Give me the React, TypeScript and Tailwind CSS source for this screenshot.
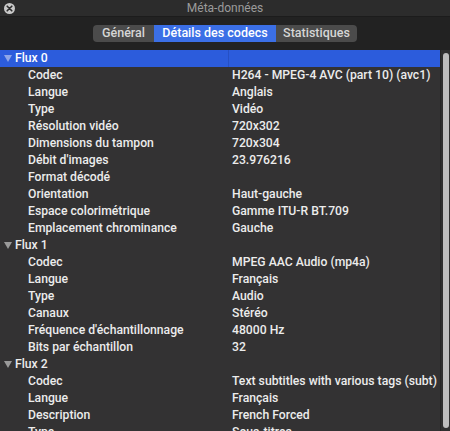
import React from 'react';

type Row = { label: string; value: string };
type Stream = { name: string; rows: Row[] };

const streams: Stream[] = [
  {
    name: 'Flux 0',
    rows: [
      { label: 'Codec', value: 'H264 - MPEG-4 AVC (part 10) (avc1)' },
      { label: 'Langue', value: 'Anglais' },
      { label: 'Type', value: 'Vidéo' },
      { label: 'Résolution vidéo', value: '720x302' },
      { label: 'Dimensions du tampon', value: '720x304' },
      { label: "Débit d'images", value: '23.976216' },
      { label: 'Format décodé', value: '' },
      { label: 'Orientation', value: 'Haut-gauche' },
      { label: 'Espace colorimétrique', value: 'Gamme ITU-R BT.709' },
      { label: 'Emplacement chrominance', value: 'Gauche' },
    ],
  },
  {
    name: 'Flux 1',
    rows: [
      { label: 'Codec', value: 'MPEG AAC Audio (mp4a)' },
      { label: 'Langue', value: 'Français' },
      { label: 'Type', value: 'Audio' },
      { label: 'Canaux', value: 'Stéréo' },
      { label: "Fréquence d'échantillonnage", value: '48000 Hz' },
      { label: 'Bits par échantillon', value: '32' },
    ],
  },
  {
    name: 'Flux 2',
    rows: [
      { label: 'Codec', value: 'Text subtitles with various tags (subt)' },
      { label: 'Langue', value: 'Français' },
      { label: 'Description', value: 'French Forced' },
      { label: 'Type', value: 'Sous-titres' },
    ],
  },
];

const tabs = ['Général', 'Détails des codecs', 'Statistiques'];

const Disclosure = ({ light }: { light?: boolean }) => (
  <svg width="8" height="7" viewBox="0 0 8 7" className="shrink-0">
    <path d="M0 0 L8 0 L4 7 Z" fill={light ? '#8fa6e8' : '#9a9a9a'} />
  </svg>
);

export default function App() {
  return (
    <div
      className="w-[450px] h-[431px] overflow-hidden flex flex-col bg-[#333233] text-[#ececec] select-none"
      style={{ fontFamily: 'Roboto, "Liberation Sans", sans-serif' }}
    >
      {/* title bar */}
      <div className="relative h-[17px] shrink-0 bg-[#2c2c2c] border-b border-[#1c1c1c] flex items-center justify-center">
        <div className="absolute left-[4px] top-[3px] w-[11px] h-[11px] rounded-full bg-[#c9c9c9] flex items-center justify-center">
          <svg width="7" height="7" viewBox="0 0 7 7">
            <path d="M1.2 1.2 L5.8 5.8 M5.8 1.2 L1.2 5.8" stroke="#2c2c2c" strokeWidth="1.6" strokeLinecap="round" />
          </svg>
        </div>
        <span className="text-[12px] text-[#9b9b9b] leading-none">Méta-données</span>
      </div>

      {/* tabs */}
      <div className="h-[33px] shrink-0 bg-[#222222] flex items-center justify-center">
        <div className="flex h-[17px] rounded-[4px] overflow-hidden bg-[#4b4b4b] text-[12.5px] font-medium leading-none">
          {tabs.map((t, i) => (
            <div
              key={t}
              className={
                i === 1
                  ? 'flex items-center justify-center w-[122px] bg-[#3b6fe6] text-white'
                  : i === 0
                  ? 'flex items-center justify-center w-[61px] text-[#d6d6d6]'
                  : 'flex items-center justify-center w-[81px] text-[#d6d6d6]'
              }
            >
              {t}
            </div>
          ))}
        </div>
      </div>

      {/* list */}
      <div className="flex-1 flex min-h-0">
        <div className="flex-1 min-w-0 text-[12.2px] font-medium">
          {streams.map((s, si) => (
            <div key={s.name}>
              <div
                className={
                  si === 0
                    ? 'h-[17px] flex items-center bg-[#2c5cdc] text-white'
                    : 'h-[17px] flex items-center text-[#ececec]'
                }
              >
                <div className="w-[228px] flex items-center gap-[3px] pl-[4px]">
                  <Disclosure light={si === 0} />
                  <span>{s.name}</span>
                </div>
                <div className={si === 0 ? 'flex-1 h-full border-l border-[#2650c4]' : 'flex-1'} />
              </div>
              {s.rows.map((r) => (
                <div key={s.name + r.label} className="h-[17px] flex items-center whitespace-nowrap">
                  <div className="w-[232px] pl-[28px] shrink-0">{r.label}</div>
                  <div className="flex-1 min-w-0">{r.value}</div>
                </div>
              ))}
            </div>
          ))}
        </div>
        {/* scrollbar */}
        <div className="w-[10px] shrink-0 bg-[#2f2f2f] border-l border-[#262626] flex justify-center py-[3px]">
          <div className="w-[6px] h-full rounded-full bg-[#bdbdbd]" />
        </div>
      </div>
    </div>
  );
}
